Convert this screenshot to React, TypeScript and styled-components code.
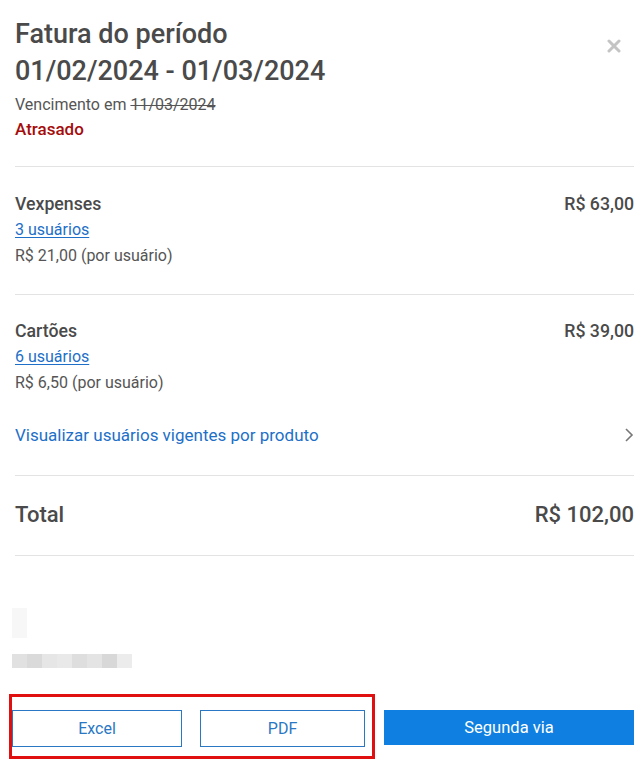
import styled, { createGlobalStyle } from 'styled-components'

const GlobalStyle = createGlobalStyle`
  body {
    margin: 0;
    background: #fff;
    font-family: Roboto, "Liberation Sans", Arial, sans-serif;
    color: #4a4a4a;
  }
`

const Panel = styled.div`
  width: 641px;
  box-sizing: border-box;
  padding: 16px 7px 0 15px;
`

const Header = styled.header`
  display: flex;
  justify-content: space-between;
  align-items: flex-start;
  padding-bottom: 24px;
  border-bottom: 1px solid #e3e3e3;
`

const Title = styled.h1`
  margin: 0;
  font-size: 27px;
  line-height: 37px;
  font-weight: 500;
  color: #4a4a4a;
`

const DueLine = styled.div`
  font-size: 16px;
  line-height: 24px;
  color: #555;
  margin-top: 3px;

  s {
    text-decoration-thickness: 1px;
  }
`

const Status = styled.div`
  font-size: 17px;
  line-height: 25px;
  color: #a50d0d;
  font-weight: 500;
`

const CloseButton = styled.button`
  border: 0;
  background: none;
  padding: 0;
  margin: 23px 13px 0 0;
  width: 14px;
  height: 14px;
  cursor: pointer;
  display: flex;
`

const Section = styled.section<{ $top: number; $bottom: number }>`
  padding: ${p => p.$top}px 0 ${p => p.$bottom}px;
  border-bottom: 1px solid #e3e3e3;
`

const ItemRow = styled.div`
  display: flex;
  justify-content: space-between;
  font-size: 17.7px;
  line-height: 26px;
  font-weight: 500;
  color: #4a4a4a;
`

const UsersLink = styled.a`
  display: block;
  width: fit-content;
  font-size: 16px;
  line-height: 26px;
  color: #1d6fc7;
  text-decoration: underline;
  text-underline-offset: 2px;
`

const UnitPrice = styled.div`
  font-size: 16px;
  line-height: 26px;
  color: #555;
`

const ProductsLink = styled.a`
  display: flex;
  justify-content: space-between;
  align-items: center;
  margin-top: 26px;
  font-size: 17px;
  line-height: 26px;
  color: #1d6fc7;
  text-decoration: none;
`

const TotalRow = styled.div`
  display: flex;
  justify-content: space-between;
  font-size: 22px;
  line-height: 30px;
  font-weight: 500;
  color: #4a4a4a;
`

const Blurred = styled.div`
  margin: 52px 0 0 -3px;
  display: flex;
  flex-direction: column;
  gap: 16px;
`

const BlurBlock = styled.div`
  width: 15px;
  height: 30px;
  background: #f7f7f7;
`

const BlurBar = styled.div`
  display: flex;
  height: 14px;
`

const BlurCell = styled.span<{ $shade: string }>`
  width: 15px;
  background: ${p => p.$shade};
`

const Footer = styled.div`
  display: flex;
  align-items: flex-start;
  gap: 9px;
  margin: 26px 0 0 -6px;
`

const Highlight = styled.div`
  display: flex;
  gap: 18px;
  border: 3px solid #e01010;
  padding: 13px 7px 9px 0;
`

const OutlineButton = styled.button<{ $width: number }>`
  width: ${p => p.$width}px;
  height: 37px;
  border: 1px solid #2a78c4;
  background: #fff;
  color: #2a78c4;
  font-family: inherit;
  font-size: 16px;
  cursor: pointer;
`

const PrimaryButton = styled.button`
  flex: 1;
  margin-top: 16px;
  height: 35px;
  border: 0;
  background: #0f7fe1;
  color: #fff;
  font-family: inherit;
  font-size: 16.5px;
  font-weight: 400;
  cursor: pointer;
`

const shades = ['#e1e1e1', '#dadada', '#e6e6e6', '#e9e9e9', '#dedede', '#e4e4e4', '#d8d8d8', '#ececec']

export default function App() {
  return (
    <>
      <GlobalStyle />
      <Panel>
        <Header>
          <div>
            <Title>
              Fatura do período
              <br />
              01/02/2024 - 01/03/2024
            </Title>
            <DueLine>
              Vencimento em <s>11/03/2024</s>
            </DueLine>
            <Status>Atrasado</Status>
          </div>
          <CloseButton aria-label="Fechar">
            <svg width="14" height="14" viewBox="0 0 14 14">
              <path d="M2 2 L12 12 M12 2 L2 12" stroke="#c4c4c4" strokeWidth="3" strokeLinecap="round" />
            </svg>
          </CloseButton>
        </Header>

        <Section $top={24} $bottom={25}>
          <ItemRow>
            <span>Vexpenses</span>
            <span>R$ 63,00</span>
          </ItemRow>
          <UsersLink href="#">3 usuários</UsersLink>
          <UnitPrice>R$ 21,00 (por usuário)</UnitPrice>
        </Section>

        <Section $top={23} $bottom={27}>
          <ItemRow>
            <span>Cartões</span>
            <span>R$ 39,00</span>
          </ItemRow>
          <UsersLink href="#">6 usuários</UsersLink>
          <UnitPrice>R$ 6,50 (por usuário)</UnitPrice>
          <ProductsLink href="#">
            <span>Visualizar usuários vigentes por produto</span>
            <svg width="10" height="16" viewBox="0 0 10 16">
              <path d="M2 2 L8 8 L2 14" fill="none" stroke="#777" strokeWidth="1.6" />
            </svg>
          </ProductsLink>
        </Section>

        <Section $top={24} $bottom={25}>
          <TotalRow>
            <span>Total</span>
            <span>R$ 102,00</span>
          </TotalRow>
        </Section>

        <Blurred>
          <BlurBlock />
          <BlurBar>
            {shades.map((s, i) => (
              <BlurCell key={i} $shade={s} />
            ))}
          </BlurBar>
        </Blurred>

        <Footer>
          <Highlight>
            <OutlineButton $width={170}>Excel</OutlineButton>
            <OutlineButton $width={165}>PDF</OutlineButton>
          </Highlight>
          <PrimaryButton>Segunda via</PrimaryButton>
        </Footer>
      </Panel>
    </>
  )
}
